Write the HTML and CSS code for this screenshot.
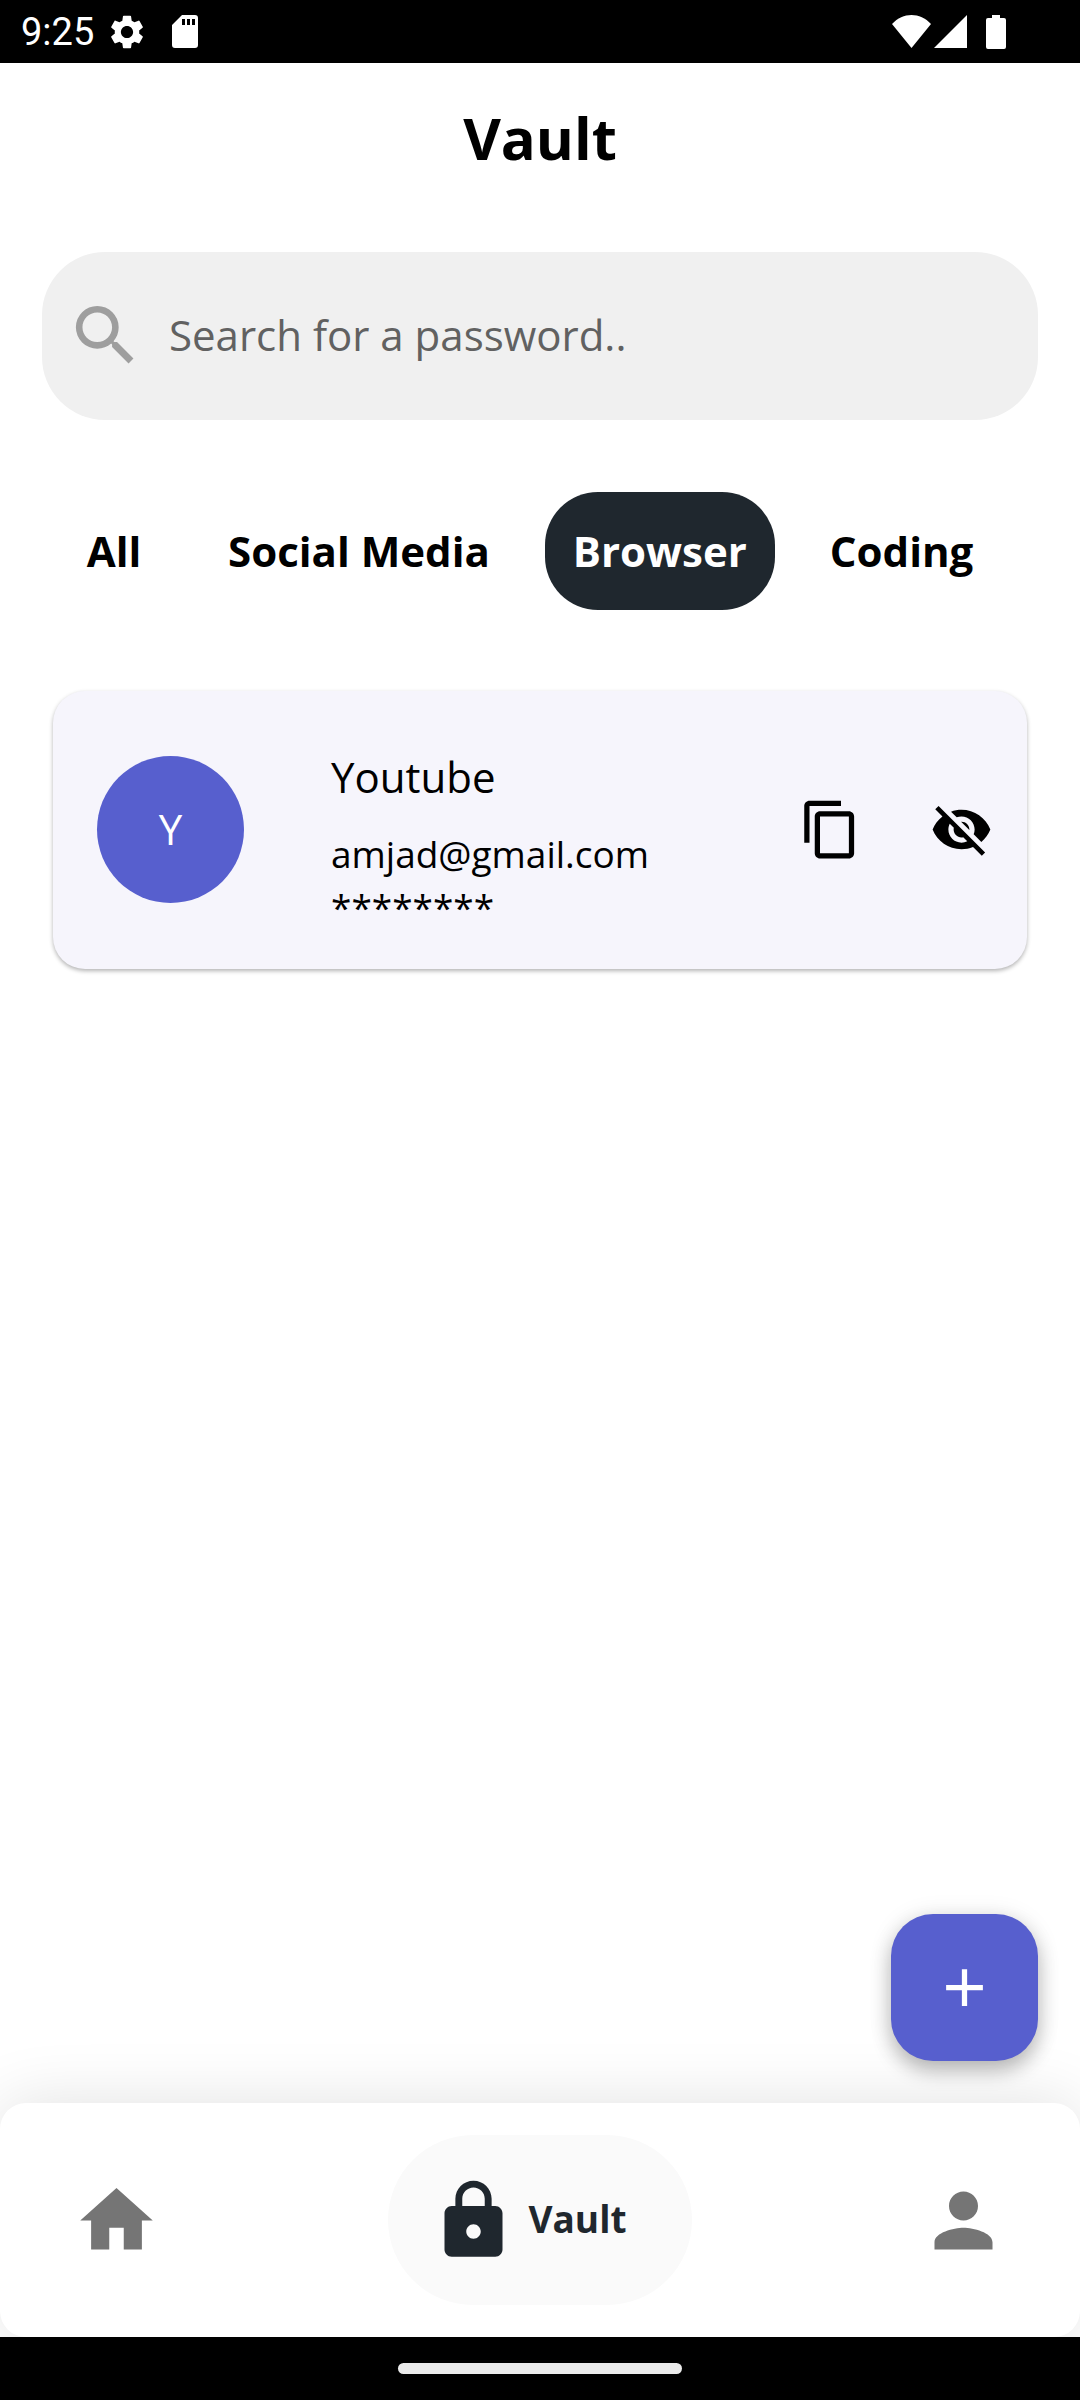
FILE: index.html
```html
<!DOCTYPE html>
<html lang="en">
<head>
<meta charset="utf-8">
<meta name="viewport" content="width=device-width, initial-scale=1">
<title>Vault</title>
<link rel="stylesheet" href="styles.css">
</head>
<body>
<div class="status-bar">
  <div class="status-left">
    <time>9:25</time>
    <svg class="status-gear" viewBox="2 2 20 20" aria-hidden="true"><path d="M19.14 12.94c.04-.3.06-.61.06-.94 0-.32-.02-.64-.07-.94l2.03-1.58a.49.49 0 0 0 .12-.61l-1.92-3.32a.488.488 0 0 0-.59-.22l-2.39.96c-.5-.38-1.03-.7-1.62-.94l-.36-2.54a.484.484 0 0 0-.48-.41h-3.84c-.24 0-.43.17-.47.41l-.36 2.54c-.59.24-1.13.57-1.62.94l-2.39-.96c-.22-.08-.47 0-.59.22L2.74 8.87c-.12.21-.08.47.12.61l2.03 1.58c-.05.3-.09.63-.09.94s.02.64.07.94l-2.03 1.58a.49.49 0 0 0-.12.61l1.92 3.32c.12.22.37.29.59.22l2.39-.96c.5.38 1.03.7 1.62.94l.36 2.54c.05.24.24.41.48.41h3.84c.24 0 .44-.17.47-.41l.36-2.54c.59-.24 1.13-.56 1.62-.94l2.39.96c.22.08.47 0 .59-.22l1.92-3.32c.12-.22.07-.47-.12-.61l-2.01-1.58zM12 15.6c-1.98 0-3.6-1.62-3.6-3.6s1.62-3.6 3.6-3.6 3.6 1.62 3.6 3.6-1.62 3.6-3.6 3.6z"/></svg>
    <svg class="status-card" viewBox="0 0 26 33" aria-hidden="true"><path fill-rule="evenodd" d="M10 0h13a3 3 0 0 1 3 3v27a3 3 0 0 1-3 3H3a3 3 0 0 1-3-3V10zM10 4v6h3V4zM15 4v6h3V4zM20 4v6h3V4z"/></svg>
  </div>
  <div class="status-right">
    <svg class="status-wifi" viewBox="0 0 39 33" aria-hidden="true"><path d="M0 9C11-3 28-3 39 9L19.500 33z"/></svg>
    <svg class="status-signal" viewBox="0 0 33 33" aria-hidden="true"><path d="M0 33L33 0v33z"/></svg>
    <svg class="status-battery" viewBox="0 0 20 34" aria-hidden="true"><path d="M6 0h8v3h4a2 2 0 0 1 2 2v27a2 2 0 0 1-2 2H2a2 2 0 0 1-2-2V5a2 2 0 0 1 2-2h4z"/></svg>
  </div>
</div>

<main class="page">
  <h1 class="page-title">Vault</h1>

  <label class="search">
    <svg class="search-icon" viewBox="0 0 24 24" aria-hidden="true"><path d="M15.500 14h-.79l-.28-.27A6.471 6.471 0 0 0 16 9.500 6.500 6.500 0 1 0 9.500 16c1.610 0 3.090-.59 4.230-1.570l.27.28v.79l5 4.990L20.490 19l-4.990-5zm-6 0C7.010 14 5 11.990 5 9.500S7.010 5 9.500 5 14 7.010 14 9.500 11.990 14 9.500 14z"/></svg>
    <input class="search-input" type="text" placeholder="Search for a password.." aria-label="Search for a password">
  </label>

  <div class="tabs">
    <button class="tab" type="button">All</button>
    <button class="tab" type="button">Social Media</button>
    <button class="tab tab-active" type="button">Browser</button>
    <button class="tab" type="button">Coding</button>
  </div>

  <article class="entry">
    <div class="avatar">Y</div>
    <div class="entry-text">
      <h2 class="entry-name">Youtube</h2>
      <p class="entry-detail">amjad@gmail.com</p>
      <p class="entry-detail">********</p>
    </div>
    <div class="entry-actions">
      <button class="icon-button" type="button" aria-label="Copy password">
        <svg viewBox="0 0 24 24" aria-hidden="true"><path d="M16 1H4c-1.100 0-2 .9-2 2v14h2V3h12V1zm3 4H8c-1.100 0-2 .9-2 2v14c0 1.100.9 2 2 2h11c1.100 0 2-.9 2-2V7c0-1.100-.9-2-2-2zm0 16H8V7h11v14z"/></svg>
      </button>
      <button class="icon-button" type="button" aria-label="Show password">
        <svg viewBox="0 0 24 24" aria-hidden="true"><path d="M12 7c2.760 0 5 2.240 5 5 0 .65-.13 1.260-.36 1.830l2.920 2.920c1.510-1.260 2.700-2.890 3.430-4.750-1.730-4.390-6-7.500-11-7.500-1.400 0-2.740.25-3.980.7l2.160 2.160C10.740 7.130 11.350 7 12 7zM2 4.270l2.280 2.280.46.46C3.080 8.300 1.780 10.020 1 12c1.730 4.390 6 7.500 11 7.500 1.550 0 3.030-.3 4.380-.84l.42.42L19.730 22 21 20.730 3.270 3 2 4.270zM7.530 9.800l1.550 1.550c-.05.21-.08.43-.08.65 0 1.660 1.340 3 3 3 .22 0 .44-.03.65-.08l1.550 1.550c-.67.33-1.410.53-2.200.53-2.760 0-5-2.240-5-5 0-.79.2-1.530.53-2.200zm4.310-.78l3.150 3.150.02-.16c0-1.660-1.340-3-3-3l-.17.01z"/></svg>
      </button>
    </div>
  </article>

  <button class="fab" type="button" aria-label="Add password">
    <svg viewBox="0 0 24 24" aria-hidden="true"><path d="M19 13h-6v6h-2v-6H5v-2h6V5h2v6h6v2z"/></svg>
  </button>
</main>

<nav class="bottom-nav" aria-label="Main">
  <a class="nav-item" href="#home" aria-label="Home">
    <svg viewBox="0 0 24 24" aria-hidden="true"><path d="M10 20v-6h4v6h5v-8h3L12 3 2 12h3v8z"/></svg>
  </a>
  <a class="nav-item nav-active" href="#vault" aria-current="page">
    <svg viewBox="0 0 24 24" aria-hidden="true"><path d="M18 8h-1V6c0-2.760-2.240-5-5-5S7 3.240 7 6v2H6c-1.100 0-2 .9-2 2v10c0 1.100.9 2 2 2h12c1.100 0 2-.9 2-2V10c0-1.100-.9-2-2-2zm-6 9c-1.100 0-2-.9-2-2s.9-2 2-2 2 .9 2 2-.9 2-2 2zm3.100-9H8.900V6c0-1.710 1.390-3.100 3.100-3.100s3.100 1.390 3.100 3.100v2z"/></svg>
    <span class="nav-label">Vault</span>
  </a>
  <a class="nav-item" href="#profile" aria-label="Profile">
    <svg viewBox="0 0 24 24" aria-hidden="true"><path d="M12 12c2.210 0 4-1.790 4-4s-1.790-4-4-4-4 1.790-4 4 1.790 4 4 4zm0 2c-2.670 0-8 1.340-8 4v2h16v-2c0-2.660-5.330-4-8-4z"/></svg>
  </a>
</nav>
<div class="gesture-bar"><div class="gesture-handle"></div></div>
</body>
</html>
```
FILE: styles.css
```css
* {
  box-sizing: border-box;
}

body {
  margin: 0;
  min-height: 100vh;
  display: flex;
  flex-direction: column;
  background: #fff;
  color: #000;
  font-family: "Open Sans", "Noto Sans", sans-serif;
  font-size: 42px;
}

svg {
  display: block;
  flex: none;
  fill: currentColor;
}

button {
  border: 0;
  padding: 0;
  background: none;
  color: inherit;
  font: inherit;
  cursor: pointer;
}

h1, h2, p {
  margin: 0;
}

/* System status bar */
.status-bar {
  display: flex;
  justify-content: space-between;
  height: 63px;
  padding: 0 74px 0 21px;
  background: #000;
  color: #fff;
  font-family: Roboto, sans-serif;
  font-size: 38px;
  line-height: 64px;
}

.status-left, .status-right {
  display: flex;
  align-items: center;
}

.status-gear {
  width: 34px;
  height: 34px;
  margin-left: 16px;
}

.status-card {
  width: 26px;
  height: 33px;
  margin-left: 28px;
}

.status-wifi {
  width: 39px;
  height: 33px;
}

.status-signal {
  width: 33px;
  height: 33px;
  margin-left: 3px;
}

.status-battery {
  width: 20px;
  height: 34px;
  margin-left: 19px;
}

/* Page */
.page {
  position: relative;
  z-index: 1;
  flex: 1;
  padding: 36px 42px;
}

.page-title {
  font-size: 58px;
  font-weight: 700;
  line-height: 78px;
  text-align: center;
}

.search {
  display: flex;
  align-items: center;
  gap: 24px;
  height: 168px;
  margin-top: 75px;
  padding: 0 24px 2px;
  border-radius: 63px;
  background: #f0f0f0;
  color: #9e9e9e;
}

.search-icon {
  width: 79px;
  height: 79px;
}

.search-input {
  flex: 1;
  min-width: 0;
  border: 0;
  padding: 0 0 2px;
  background: none;
  color: #000;
  font: inherit;
  outline: none;
}

.search-input::placeholder {
  color: #616161;
  opacity: 1;
}

.tabs {
  display: flex;
  gap: 27px;
  margin-top: 72px;
  padding: 0 13px;
}

.tab {
  min-width: 118px;
  height: 118px;
  padding: 0 28px 2px;
  border-radius: 53px;
  font-weight: 700;
  white-space: nowrap;
}

.tab-active {
  background: #1f272e;
  color: #fff;
}

/* Password entry */
.entry {
  display: flex;
  align-items: center;
  min-height: 278px;
  margin: 81px 11px 0;
  padding: 0 34px 2px 44px;
  border-radius: 32px;
  background: #f6f5fc;
  box-shadow: 0 2px 4px rgba(0, 0, 0, 0.3);
}

.avatar {
  display: grid;
  place-items: center;
  flex: none;
  width: 147px;
  height: 147px;
  padding-bottom: 2px;
  border-radius: 50%;
  background: #575fce;
  color: #fff;
}

.entry-text {
  flex: 1;
  min-width: 0;
  margin-left: 87px;
  padding-top: 20px;
}

.entry-name {
  margin-bottom: 18px;
  font-size: 42px;
  font-weight: 400;
  line-height: 64px;
}

.entry-detail {
  font-size: 37px;
  line-height: 53px;
}

.entry-actions {
  display: flex;
  gap: 68px;
}

.icon-button svg, .fab svg {
  width: 63px;
  height: 63px;
}

.fab {
  position: absolute;
  right: 42px;
  bottom: 42px;
  display: grid;
  place-items: center;
  width: 147px;
  height: 147px;
  border-radius: 42px;
  background: #575fce;
  color: #fff;
  box-shadow: 0 10px 20px rgba(0, 0, 0, 0.24), 0 2px 24px rgba(0, 0, 0, 0.1);
}

/* Bottom navigation */
.bottom-nav {
  display: flex;
  align-items: center;
  justify-content: space-between;
  padding: 32px 73px;
  border-radius: 26px;
  background: #fff;
  box-shadow: 0 0 66px rgba(0, 0, 0, 0.12);
}

.nav-item {
  display: flex;
  align-items: center;
  gap: 11px;
  color: #757575;
  text-decoration: none;
}

.nav-item svg {
  width: 87px;
  height: 87px;
}

.nav-active {
  height: 170px;
  padding: 0 65px 0 42px;
  border-radius: 85px;
  background: #fafafa;
  color: #1f272e;
  font-size: 37px;
  font-weight: 700;
}

.nav-label {
  padding-bottom: 3px;
}

/* System gesture area */
.gesture-bar {
  display: grid;
  place-items: center;
  position: relative;
  height: 63px;
  background: #000;
}

.gesture-handle {
  width: 284px;
  height: 11px;
  border-radius: 6px;
  background: #ebebeb;
}
```
